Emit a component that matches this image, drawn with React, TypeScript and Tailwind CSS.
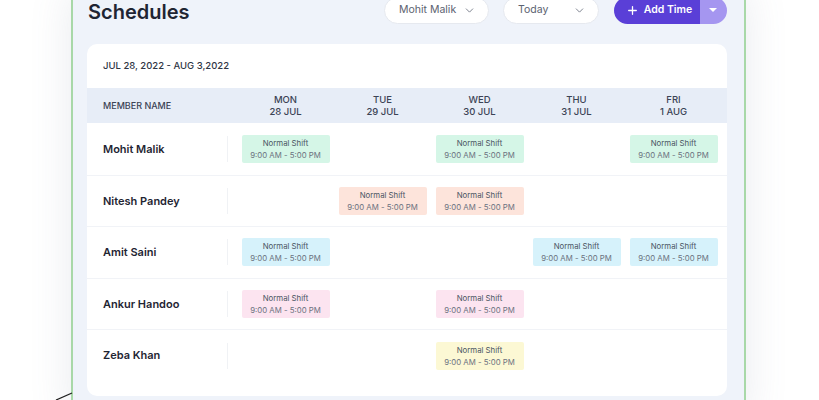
import { ChevronDown, Plus } from 'lucide-react';

type Shift = { day: number; tone: string };

const days = [
  { name: 'MON', date: '28 JUL' },
  { name: 'TUE', date: '29 JUL' },
  { name: 'WED', date: '30 JUL' },
  { name: 'THU', date: '31 JUL' },
  { name: 'FRI', date: '1 AUG' },
];

const tones: Record<string, string> = {
  green: 'bg-[#d5f6e7]',
  peach: 'bg-[#fde4db]',
  cyan: 'bg-[#d6f2fb]',
  pink: 'bg-[#fce4f0]',
  yellow: 'bg-[#fcf8d4]',
};

const members: { name: string; shifts: Shift[] }[] = [
  { name: 'Mohit Malik', shifts: [{ day: 0, tone: 'green' }, { day: 2, tone: 'green' }, { day: 4, tone: 'green' }] },
  { name: 'Nitesh Pandey', shifts: [{ day: 1, tone: 'peach' }, { day: 2, tone: 'peach' }] },
  { name: 'Amit Saini', shifts: [{ day: 0, tone: 'cyan' }, { day: 3, tone: 'cyan' }, { day: 4, tone: 'cyan' }] },
  { name: 'Ankur Handoo', shifts: [{ day: 0, tone: 'pink' }, { day: 2, tone: 'pink' }] },
  { name: 'Zeba Khan', shifts: [{ day: 2, tone: 'yellow' }] },
];

function ShiftCard({ tone }: { tone: string }) {
  return (
    <div className={`w-[88px] h-[28px] rounded-[2px] flex flex-col items-center justify-center leading-[12px] ${tones[tone]}`}>
      <span className="text-[7.8px] text-[#4b5563]">Normal Shift</span>
      <span className="text-[7.8px] text-[#6b7280]">9:00 AM - 5:00 PM</span>
    </div>
  );
}

function Pill({ label, width }: { label: string; width: string }) {
  return (
    <div className={`${width} h-[27px] rounded-full bg-white border border-[#e6e9ef] flex items-center justify-between pl-[14px] pr-[12px]`}>
      <span className="text-[10.5px] text-[#5b6270]">{label}</span>
      <ChevronDown size={13} strokeWidth={1.6} className="text-[#6b7280]" />
    </div>
  );
}

export default function App() {
  return (
    <div className="relative w-[819px] h-[400px] overflow-hidden bg-white font-['Inter',sans-serif]">
      <div className="-mt-[10px] ml-[71px] w-[675px] h-[430px] bg-[#eff3fa] border-x-2 border-[#a8d8a8] pl-[14px] pr-[17px] pt-[6px] shadow-[0_0_40px_rgba(100,116,139,0.14)]">
        <div className="flex items-center justify-between h-[28px]">
          <h1 className="text-[20px] leading-none font-semibold text-[#1f2533] pl-[1px] pt-[4px]">Schedules</h1>
          <div className="flex items-center gap-[14px]">
            <Pill label="Mohit Malik" width="w-[105px]" />
            <Pill label="Today" width="w-[96px]" />
            <div className="flex h-[27px] w-[113px] rounded-full overflow-hidden ml-[1px]">
              <div className="flex-1 bg-[#5a3fd7] flex items-center justify-center gap-[5px] pl-[4px]">
                <Plus size={13} strokeWidth={2.4} className="text-white" />
                <span className="text-[10.5px] font-semibold text-white">Add Time</span>
              </div>
              <div className="w-[27px] bg-[#a596f0] flex items-center justify-center pr-[2px]">
                <div className="w-0 h-0 border-x-[4px] border-x-transparent border-t-[4px] border-t-white" />
              </div>
            </div>
          </div>
        </div>

        <div className="mt-[20px] w-[640px] h-[352px] bg-white rounded-[10px] overflow-hidden">
          <div className="h-[44px] flex items-center pl-[16px]">
            <span className="text-[9.5px] font-medium text-[#2f3645]">JUL 28, 2022 - AUG 3,2022</span>
          </div>
          <div className="grid grid-cols-[150px_repeat(5,97px)] h-[35px] bg-[#e7edf7] items-center">
            <span className="pl-[16px] text-[9px] font-medium text-[#3b4355]">MEMBER NAME</span>
            {days.map((d) => (
              <div key={d.name} className="flex flex-col items-center leading-[12px] text-[9.5px] font-medium text-[#3b4355]">
                <span>{d.name}</span>
                <span>{d.date}</span>
              </div>
            ))}
          </div>
          {members.map((m, i) => (
            <div
              key={m.name}
              className={`grid grid-cols-[150px_repeat(5,97px)] h-[51.6px] items-center ${i > 0 ? 'border-t border-[#f1f3f7]' : ''}`}
            >
              <div className="flex items-center justify-between pl-[16px] pr-[9px]">
                <span className="text-[11px] font-semibold text-[#1f2533]">{m.name}</span>
                <div className="w-px h-[26px] bg-[#f0f2f5]" />
              </div>
              {days.map((_, di) => {
                const s = m.shifts.find((x) => x.day === di);
                return (
                  <div key={di} className="flex justify-center">
                    {s && <ShiftCard tone={s.tone} />}
                  </div>
                );
              })}
            </div>
          ))}
        </div>
      </div>
      <svg className="absolute left-[55px] top-[391px]" width="20" height="10" viewBox="0 0 20 10">
        <line x1="1" y1="9" x2="17" y2="2" stroke="#1f1f1f" strokeWidth="1.3" />
      </svg>
    </div>
  );
}
